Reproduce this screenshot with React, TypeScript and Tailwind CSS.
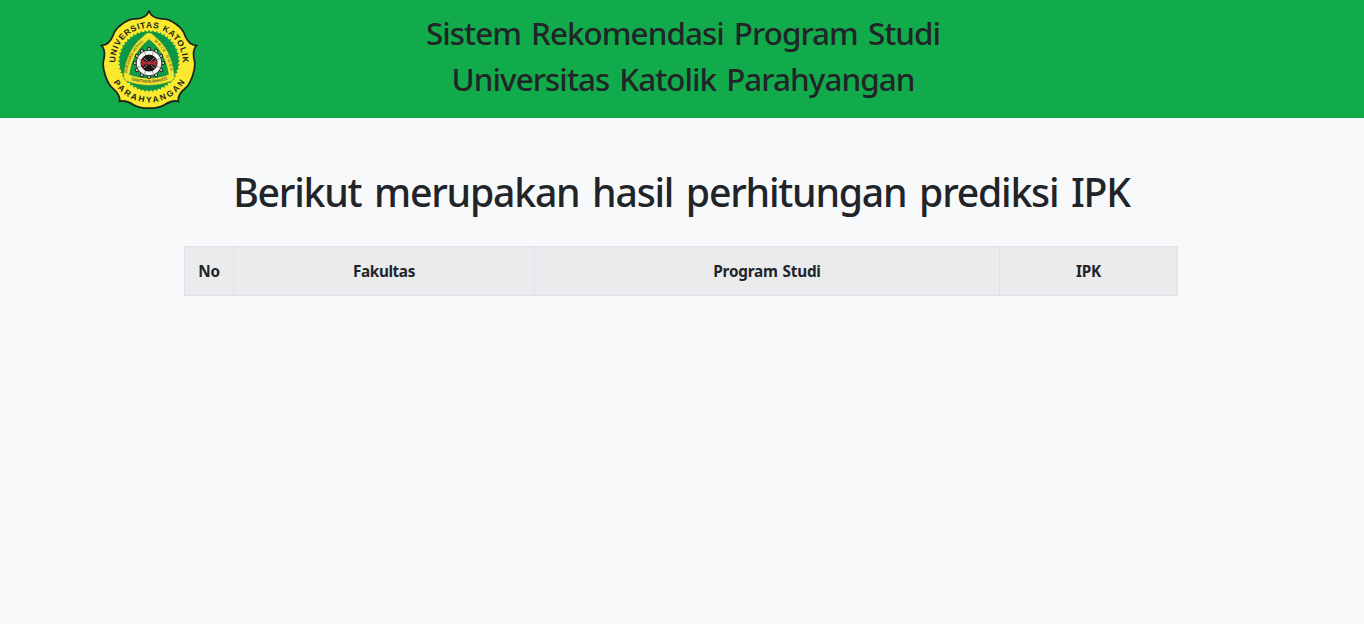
import React from 'react';

const polar = (deg: number, r: number) => {
  const a = (deg * Math.PI) / 180;
  return `${(r * Math.sin(a)).toFixed(2)} ${(-r * Math.cos(a)).toFixed(2)}`;
};

const lobes = [
  { turn: 0, neck: 44, bulge: 47.8 },
  { turn: 72, neck: 45.4, bulge: 47.8 },
  { turn: 144, neck: 46.5, bulge: 49 },
  { turn: 216, neck: 45.4, bulge: 47.8 },
  { turn: 288, neck: 44, bulge: 47.8 },
];
const knobs = [0, 30, 60, 90, 120, 150, 180, 210, 240, 270, 300, 330];
const spokes = [22.5, 67.5, 112.5, 157.5, 202.5, 247.5, 292.5, 337.5];
const rays = Array.from({ length: 48 }, (_, i) => i * 7.5);
const quarter = [0, 90, 180, 270];

const outline =
  `M${polar(0, 50)}` +
  lobes
    .map(
      ({ turn: t, neck, bulge }) =>
        `C${polar(t + 2.5, neck + 0.8)} ${polar(t + 9, neck - 1)} ${polar(t + 17, neck)}` +
        `C${polar(t + 26, bulge)} ${polar(t + 46, bulge)} ${polar(t + 55, neck)}` +
        `C${polar(t + 63, neck - 1)} ${polar(t + 69.5, neck + 0.8)} ${polar(t + 72, 50)}`,
    )
    .join('') +
  'Z';

function Seal() {
  return (
    <svg
      viewBox="-50 -51 100 100"
      className="size-[100px] shrink-0 font-['Liberation_Sans',sans-serif]"
      aria-label="Universitas Katolik Parahyangan"
    >
      <defs>
        <path id="arcTop" d="M-33.4 4 A33.6 33.6 0 1 1 33.4 4" />
        <path id="arcBottom" d="M-41.5 0 A41.5 41.5 0 0 0 41.5 0" />
        <path id="sideLeft" d="M-22 13 Q-19.5 -9 -2.5 -21.5" />
        <path id="sideRight" d="M2.5 -21.5 Q19.5 -9 22 13" />
        <path id="sideBottom" d="M-19 18.6 Q0 25.2 19 18.6" />
      </defs>
      <path d={outline} fill="#fbe92f" stroke="#20261b" strokeWidth="1.8" strokeLinejoin="miter" />
      <circle r="29.5" fill="#0b9a48" />
      {rays.map((r) => (
        <path key={r} d="M-1.3 -29 L0 -31.2 L1.3 -29Z" transform={`rotate(${r})`} fill="#0b9a48" />
      ))}
      {rays.map((r) => (
        <path key={r} d="M0 -14 V-29" transform={`rotate(${r + 3.75})`} stroke="#0a7f3c" strokeWidth="0.4" />
      ))}
      <path
        d="M0 -28.5 Q3 -28.5 5 -25.5 Q23 -12 25.5 14 Q26.5 18 22 20.5 Q0 28.5 -22 20.5 Q-26.5 18 -25.5 14 Q-23 -12 -5 -25.5 Q-3 -28.5 0 -28.5Z"
        fill="#f3e52f"
        stroke="#147a36"
        strokeWidth="0.5"
      />
      <path
        d="M0 -21.5 Q16.5 -9 19.5 13.5 Q0 21 -19.5 13.5 Q-16.5 -9 0 -21.5Z"
        fill="#0f9b48"
        stroke="#147a36"
        strokeWidth="0.4"
      />
      <g className="text-[4px] font-bold" fill="#7d7a24">
        <text>
          <textPath href="#sideLeft" textLength="36" startOffset="1">BAKUNING HYANG</textPath>
        </text>
        <text>
          <textPath href="#sideRight" textLength="35" startOffset="3">MRIH GUNA</textPath>
        </text>
      </g>
      <text className="text-[4.4px] font-bold" fill="#5e6220">
        <textPath href="#sideBottom" textLength="37" startOffset="1">SANTYAYA BHAKTI</textPath>
      </text>
      <g transform="translate(0 2)">
        {knobs.map((k) => (
          <g key={k} transform={`rotate(${k})`}>
            <circle r="2.1" cy="-14" fill="#24271f" />
            <circle r="1" cy="-14" fill="#ecece6" />
          </g>
        ))}
        <circle r="12.8" fill="#fbfbf9" stroke="#2a2a2a" strokeWidth="0.9" />
        {spokes.map((k) => (
          <path key={k} d="M0 -8 V-12" transform={`rotate(${k})`} stroke="#777" strokeWidth="0.6" />
        ))}
        <circle r="8.6" fill="#171717" />
        {quarter.map((q) => (
          <path
            key={q}
            d="M-0.8 -1 Q-1.3 -4.5 -4.2 -7 Q0 -8.8 4.2 -7 Q1.3 -4.5 0.8 -1Z"
            transform={`rotate(${q})`}
            fill={q % 180 === 0 ? '#1f1718' : '#a92a39'}
          />
        ))}
        {quarter.map((q) => (
          <path key={q} d="M0 -2.5 L0 -7.8" transform={`rotate(${q + 45})`} stroke="#bdb1b0" strokeWidth="0.7" />
        ))}
        <circle r="1.8" fill="#c43244" />
      </g>
      <g className="text-[8.4px] font-bold" fill="#20231c">
        <text>
          <textPath href="#arcTop" textLength="108" startOffset="2.5">UNIVERSITAS KATOLIK</textPath>
        </text>
        <text>
          <textPath href="#arcBottom" textLength="86" startOffset="22.3">PARAHYANGAN</textPath>
        </text>
      </g>
    </svg>
  );
}

export default function App() {
  return (
    <div className="min-h-screen bg-[#f8f9fa] font-['Noto_Sans','Open_Sans',sans-serif] text-[#212529]">
      <header className="flex h-[118px] bg-[#12ab4b] pl-[99px] pt-[10px]">
        <Seal />
        <div className="flex w-[968px] flex-col items-center gap-2 pt-[4px] text-[31.4px] font-medium leading-[38px] tracking-[-0.95px] [word-spacing:2.8px]">
          <h2>Sistem Rekomendasi Program Studi</h2>
          <h2>Universitas Katolik Parahyangan</h2>
        </div>
      </header>
      <main className="flex flex-col items-center pt-[50px]">
        <h1 className="mr-px text-[39.2px] font-medium leading-[48px] tracking-[-1.22px] [word-spacing:3.7px]">
          Berikut merupakan hasil perhitungan prediksi IPK
        </h1>
        <table className="mr-[2px] mt-[30px] h-[50px] w-[994px] table-fixed border-collapse bg-[#eaebec] text-[15.3px] tracking-[-0.2px] [word-spacing:1px]">
          <thead>
            <tr>
              <th className="w-[49px] border border-[#dee2e6]">No</th>
              <th className="w-[301px] border border-[#dee2e6] tracking-[-0.4px]">Fakultas</th>
              <th className="w-[465px] border border-[#dee2e6]">Program Studi</th>
              <th className="border border-[#dee2e6]">IPK</th>
            </tr>
          </thead>
        </table>
      </main>
    </div>
  );
}
